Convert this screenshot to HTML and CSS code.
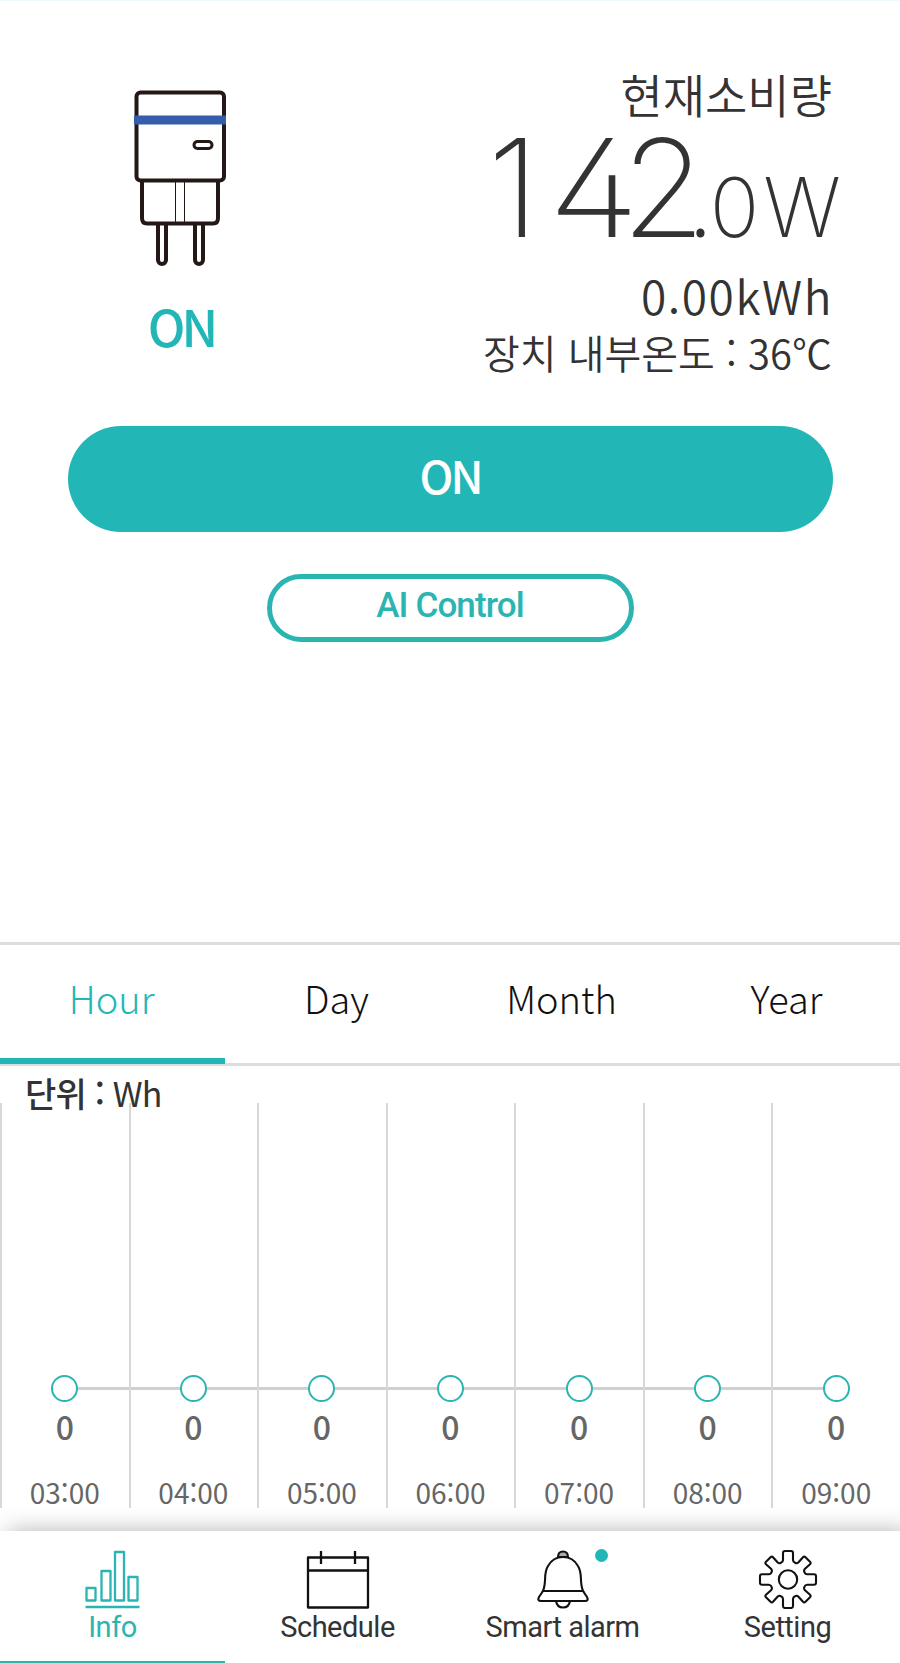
FILE: index.html
```html
<!DOCTYPE html>
<html lang="ko">
<head>
    <meta charset="UTF-8">
    <title>Smart Plug</title>
    <link rel="stylesheet" href="styles.css">
</head>
<body>
<div class="content">
    <div class="summary">
        <div class="device">
            <svg class="plug" width="94" height="178" viewBox="0 0 94 178" fill="none" stroke="#231815" stroke-width="4">
                <path d="M24 134v36a4 4 0 0 0 8 0v-36M61 134v36a4 4 0 0 0 8 0v-36"/>
                <path d="M8 90v38q0 5.500 5 5.500h66q5 0 5-5.500v-38"/>
                <path d="M41.500 90v42M50.500 90v42" stroke-width="1"/>
                <rect x="2.500" y="2.500" width="87.500" height="88" rx="4"/>
                <rect x="60" y="51.500" width="18" height="7" rx="3.500" stroke-width="3"/>
                <path d="M0 30h92" stroke="#365cac" stroke-width="9"/>
            </svg>
            <p class="device-state"><span>ON</span></p>
        </div>
        <div class="usage">
            <p class="usage-title">현재소비량</p>
            <p class="usage-watt"><span class="watt-1">1</span><span class="watt-4">4</span><span class="watt-2">2</span><span class="watt-dot">.</span><span class="watt-dec">0</span><span class="watt-unit">W</span></p>
            <p class="usage-kwh">0.00kWh</p>
            <p class="usage-temp">장치 내부온도 : 36℃</p>
        </div>
    </div>
    <div class="control-box">
        <button class="btn-power">ON</button>
        <button class="btn-ai">AI Control</button>
    </div>
    <div class="tabs">
        <a class="tab tab-on">Hour</a>
        <a class="tab">Day</a>
        <a class="tab">Month</a>
        <a class="tab">Year</a>
    </div>
    <div class="chart">
        <p class="chart-unit"><b>단위 :</b> <span>Wh</span></p>
        <div class="chart-cols">
            <div class="col"><i class="dot"></i><b>0</b><span>03:00</span></div>
            <div class="col"><i class="dot"></i><b>0</b><span>04:00</span></div>
            <div class="col"><i class="dot"></i><b>0</b><span>05:00</span></div>
            <div class="col"><i class="dot"></i><b>0</b><span>06:00</span></div>
            <div class="col"><i class="dot"></i><b>0</b><span>07:00</span></div>
            <div class="col"><i class="dot"></i><b>0</b><span>08:00</span></div>
            <div class="col"><i class="dot"></i><b>0</b><span>09:00</span></div>
        </div>
    </div>
    <div class="nav">
        <a class="nav-item nav-on">
            <svg width="60" height="60" viewBox="0 0 60 60" fill="none" stroke="#2bb5b2" stroke-width="2.300">
                <path d="M3.500 39h9v12.500h-9zM18.500 22h9v29.500h-9zM32 3h9v48.500h-9zM45.500 28h9v23.500h-9z" stroke-linejoin="round"/>
                <path d="M2.500 58h54"/>
            </svg>
            <span>Info</span>
        </a>
        <a class="nav-item">
            <svg width="64" height="60" viewBox="0 0 64 60" fill="none" stroke="#111" stroke-width="2.300">
                <path d="M2 8.500h60v50H2zM2 21.500h60" stroke-linejoin="round"/>
                <path d="M15 2v13M49 2v13"/>
            </svg>
            <span>Schedule</span>
        </a>
        <a class="nav-item">
            <svg width="60" height="60" viewBox="0 0 60 60" fill="none" stroke="#111" stroke-width="2.100">
                <path d="M10 42C14 32 10 25 15 17Q20 8 30 8T45 17C50 25 46 32 50 42Z"/>
                <path d="M10 42l-4 6q-2 4 2 4h44q4 0 2-4l-4-6" stroke-linejoin="round"/>
                <path d="M23 52q1 6.500 7 6.500t7-6.500"/>
                <path d="M25 8q0-5.500 5-5.500T35 8z" fill="#aaa"/>
            </svg>
            <i class="badge"></i>
            <span>Smart alarm</span>
        </a>
        <a class="nav-item">
            <svg width="60" height="60" viewBox="0 0 60 60" fill="none" stroke="#111" stroke-width="2.100" stroke-linejoin="round">
                <circle cx="30" cy="30.500" r="9.200"/>
                <path d="M25 4q0-2 2-2h6q2 0 2 2v7q0 2 2 2.800 2 1 3.500-.5l4.500-5q1.200-1.200 2.500 0l4.500 4.500q1.200 1.300 0 2.500l-5 4.500q-1.500 1.500-.5 3.500 .8 2 2.800 2h6.700q2 0 2 2v6.400q0 2-2 2h-6.700q-2 0-2.800 2-1 2 .5 3.500l5 4.500q1.200 1.300 0 2.500l-4.500 4.500q-1.300 1.200-2.500 0l-4.500-5q-1.500-1.500-3.500-.5-2 .8-2 2.800v7q0 2-2 2h-6q-2 0-2-2v-7q0-2-2-2.800-2-1-3.500 .5l-4.500 5q-1.200 1.200-2.500 0l-4.500-4.500q-1.200-1.300 0-2.500l5-4.500q1.500-1.500 .5-3.500-.8-2-2.800-2h-6.700q-2 0-2-2v-6.400q0-2 2-2h6.700q2 0 2.800-2 1-2-.5-3.500l-5-4.500q-1.200-1.300 0-2.500l4.500-4.500q1.300-1.200 2.500 0l4.500 5q1.500 1.500 3.500 .5 2-.8 2-2.800z"/>
            </svg>
            <span>Setting</span>
        </a>
    </div>
</div>
</body>
</html>
```
FILE: styles.css
```css
* {
    margin: 0;
    padding: 0;
    box-sizing: border-box;
}

body {
    width: 900px;
    font-family: "Noto Sans CJK KR", "Noto Sans", sans-serif;
    font-weight: 300;
    color: #333;
    background-color: #fff;
}

.content {
    height: 1663px;
    overflow: hidden;
    display: flex;
    flex-direction: column;
}

.summary {
    height: 426px;
    padding: 64px 68px 0 134px;
    border-top: 1px solid #effaff;
    display: flex;
    justify-content: space-between;
}

.device {
    width: 94px;
    padding-top: 25px;
    display: flex;
    flex-direction: column;
    align-items: center;
}

.device svg {
    flex: none;
}

.device-state {
    margin-top: 29px;
    font-size: 50px;
    line-height: 56px;
    font-weight: 500;
    letter-spacing: -4px;
    color: #22b6b6;
}

.usage {
    display: flex;
    flex-direction: column;
    align-items: flex-end;
    white-space: nowrap;
}

.usage-title {
    font-size: 46px;
    line-height: 56px;
    font-weight: 350;
}

.usage-watt {
    height: 145px;
    margin-right: -9px;
    font-family: Inter, sans-serif;
    font-feature-settings: "cv02";
    font-weight: 200;
    font-size: 136px;
    line-height: 133px;
}

.watt-1 {
    letter-spacing: 9px;
}

.watt-4 {
    display: inline-block;
    letter-spacing: -10px;
    transform: scaleX(1.1);
    transform-origin: left;
}

.watt-2 {
    letter-spacing: -14px;
}

.watt-dot {
    font-family: "Open Sans", sans-serif;
    font-size: 70px;
    font-weight: 400;
}

.watt-dec,
.watt-unit {
    font-size: 82px;
}

.watt-unit {
    margin-left: 4px;
}

.usage-kwh {
    margin-right: -1px;
    font-size: 46px;
    line-height: 58px;
    font-weight: 350;
    letter-spacing: 1.6px;
}

.usage-temp {
    font-size: 40px;
    line-height: 56px;
    font-weight: 350;
}

.control-box {
    height: 516px;
    display: flex;
    flex-direction: column;
    align-items: center;
}

.control-box button {
    font-family: inherit;
    font-weight: 500;
}

.control-box .btn-power {
    width: 765px;
    height: 106px;
    padding-bottom: 10px;
    border: none;
    border-radius: 53px;
    background-color: #22b6b6;
    font-size: 45px;
    letter-spacing: -3px;
    color: #fff;
}

.control-box .btn-ai {
    width: 367px;
    height: 68px;
    margin-top: 42px;
    padding-bottom: 5px;
    border: 5px solid #2bb5b2;
    border-radius: 34px;
    background-color: #fff;
    font-family: Roboto, sans-serif;
    font-size: 35px;
    letter-spacing: -0.9px;
    color: #2bb5b2;
}

.tabs {
    height: 124px;
    border-top: 3px solid #ddd;
    border-bottom: 3px solid #ddd;
    display: flex;
    background-color: #fff;
}

.tab {
    width: 225px;
    height: 119px;
    padding: 0 2px 14px 0;
    display: flex;
    align-items: center;
    justify-content: center;
    font-size: 38px;
    color: #111;
}

.tab-on {
    border-bottom: 6px solid #22b6b6;
    padding-bottom: 8px;
    color: #22b6b6;
}

.chart {
    height: 465px;
}

.chart-unit {
    height: 37px;
    padding-left: 25px;
    font-size: 34px;
    line-height: 54px;
    letter-spacing: -0.8px;
    font-weight: 400;
}

.chart-unit b {
    font-weight: 500;
}

.chart-cols {
    height: 405px;
    display: grid;
    grid-template-columns: repeat(7, 1fr);
    background: linear-gradient(#d0d0d0, #d0d0d0) 64px 284px / 772px 3px no-repeat;
}

.col {
    height: 405px;
    padding: 272px 1px 0 0;
    border-left: 2px solid #d8d8d8;
    display: flex;
    flex-direction: column;
    align-items: center;
    color: #666;
}

.dot {
    flex: none;
    width: 27px;
    height: 27px;
    border: 2px solid #2bb5b2;
    border-radius: 50%;
    background-color: #fff;
}

.col b {
    margin-top: 4px;
    font-size: 32px;
    line-height: 40px;
    font-weight: 500;
}

.col span {
    margin-top: 33px;
    font-size: 28px;
    line-height: 26px;
    font-weight: 400;
}

.nav {
    height: 132px;
    display: flex;
    background-color: #fff;
    box-shadow: 8px 0 22px rgba(0, 0, 0, 0.3);
}

.nav-item {
    position: relative;
    width: 225px;
    padding-top: 18px;
    display: flex;
    flex-direction: column;
    align-items: center;
    color: #333;
}

.nav-item span {
    font-family: Roboto, sans-serif;
    font-size: 29px;
    line-height: 36px;
    font-weight: 400;
    letter-spacing: -0.5px;
}

.nav-on {
    border-bottom: 2px solid #2bb5b2;
    color: #2bb5b2;
}

.badge {
    position: absolute;
    left: 145px;
    top: 18px;
    width: 13px;
    height: 13px;
    border-radius: 50%;
    background-color: #22b6b6;
}
```
